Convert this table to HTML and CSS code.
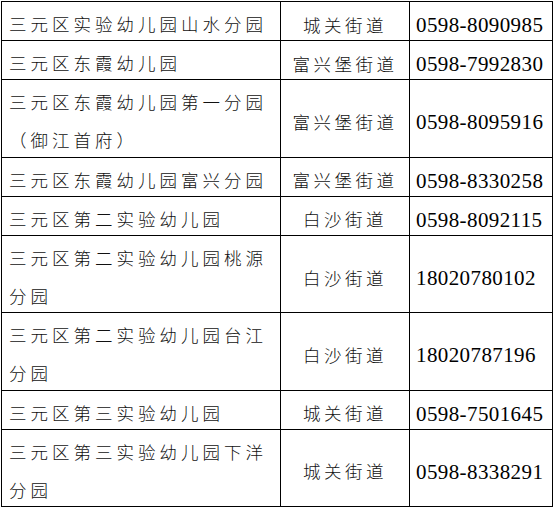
FILE: index.html
```html
<!DOCTYPE html>
<html lang="zh-CN">
<head>
<meta charset="utf-8">
<title>幼儿园名单</title>
<link rel="stylesheet" href="styles.css">
</head>
<body>
<div class="table">
  <div class="c name"><div class="t">三元区实验幼儿园山水分园</div></div>
  <div class="c street"><span>城关街道</span></div>
  <div class="c phone"><span>0598-8090985</span></div>

  <div class="c name"><div class="t">三元区东霞幼儿园</div></div>
  <div class="c street"><span>富兴堡街道</span></div>
  <div class="c phone"><span>0598-7992830</span></div>

  <div class="c name"><div class="t">三元区东霞幼儿园第一分园（御江首府）</div></div>
  <div class="c street"><span>富兴堡街道</span></div>
  <div class="c phone"><span>0598-8095916</span></div>

  <div class="c name"><div class="t">三元区东霞幼儿园富兴分园</div></div>
  <div class="c street"><span>富兴堡街道</span></div>
  <div class="c phone"><span>0598-8330258</span></div>

  <div class="c name"><div class="t">三元区第二实验幼儿园</div></div>
  <div class="c street"><span>白沙街道</span></div>
  <div class="c phone"><span>0598-8092115</span></div>

  <div class="c name"><div class="t">三元区第二实验幼儿园桃源分园</div></div>
  <div class="c street"><span>白沙街道</span></div>
  <div class="c phone"><span>18020780102</span></div>

  <div class="c name"><div class="t">三元区第二实验幼儿园台江分园</div></div>
  <div class="c street"><span>白沙街道</span></div>
  <div class="c phone"><span>18020787196</span></div>

  <div class="c name"><div class="t">三元区第三实验幼儿园</div></div>
  <div class="c street"><span>城关街道</span></div>
  <div class="c phone"><span>0598-7501645</span></div>

  <div class="c name"><div class="t">三元区第三实验幼儿园下洋分园</div></div>
  <div class="c street"><span>城关街道</span></div>
  <div class="c phone"><span>0598-8338291</span></div>
</div>
</body>
</html>
```

FILE: styles.css
```css
html, body {
  margin: 0;
  background: #fff;
  color: #000;
}

.table {
  display: grid;
  grid-template-columns: 279px 129px 143px;
  width: max-content;
  margin: 1px 0 0 1px;
  border-top: 1px solid #000;
  border-left: 1px solid #000;
}

.c {
  border-right: 1px solid #000;
  border-bottom: 1px solid #000;
}

.name {
  padding: 3px 4px 0 7px;
  font-family: "Noto Sans CJK SC", sans-serif;
  font-weight: 300;
  font-size: 17.5px;
  line-height: 38.15px;
  letter-spacing: 4px;
  color: #111;
}

.name .t {
  margin-bottom: -3px;
}

.street {
  display: flex;
  align-items: center;
  justify-content: center;
  padding-top: 7px;
  font-family: "Noto Sans CJK SC", sans-serif;
  font-weight: 300;
  font-size: 17.5px;
  line-height: 30px;
  letter-spacing: 3.5px;
  color: #111;
}

.phone {
  display: flex;
  align-items: center;
  padding: 8px 0 0 6px;
  font-family: "Liberation Serif", "Times New Roman", serif;
  font-size: 21px;
  line-height: 30px;
  letter-spacing: 0.4px;
}
```
